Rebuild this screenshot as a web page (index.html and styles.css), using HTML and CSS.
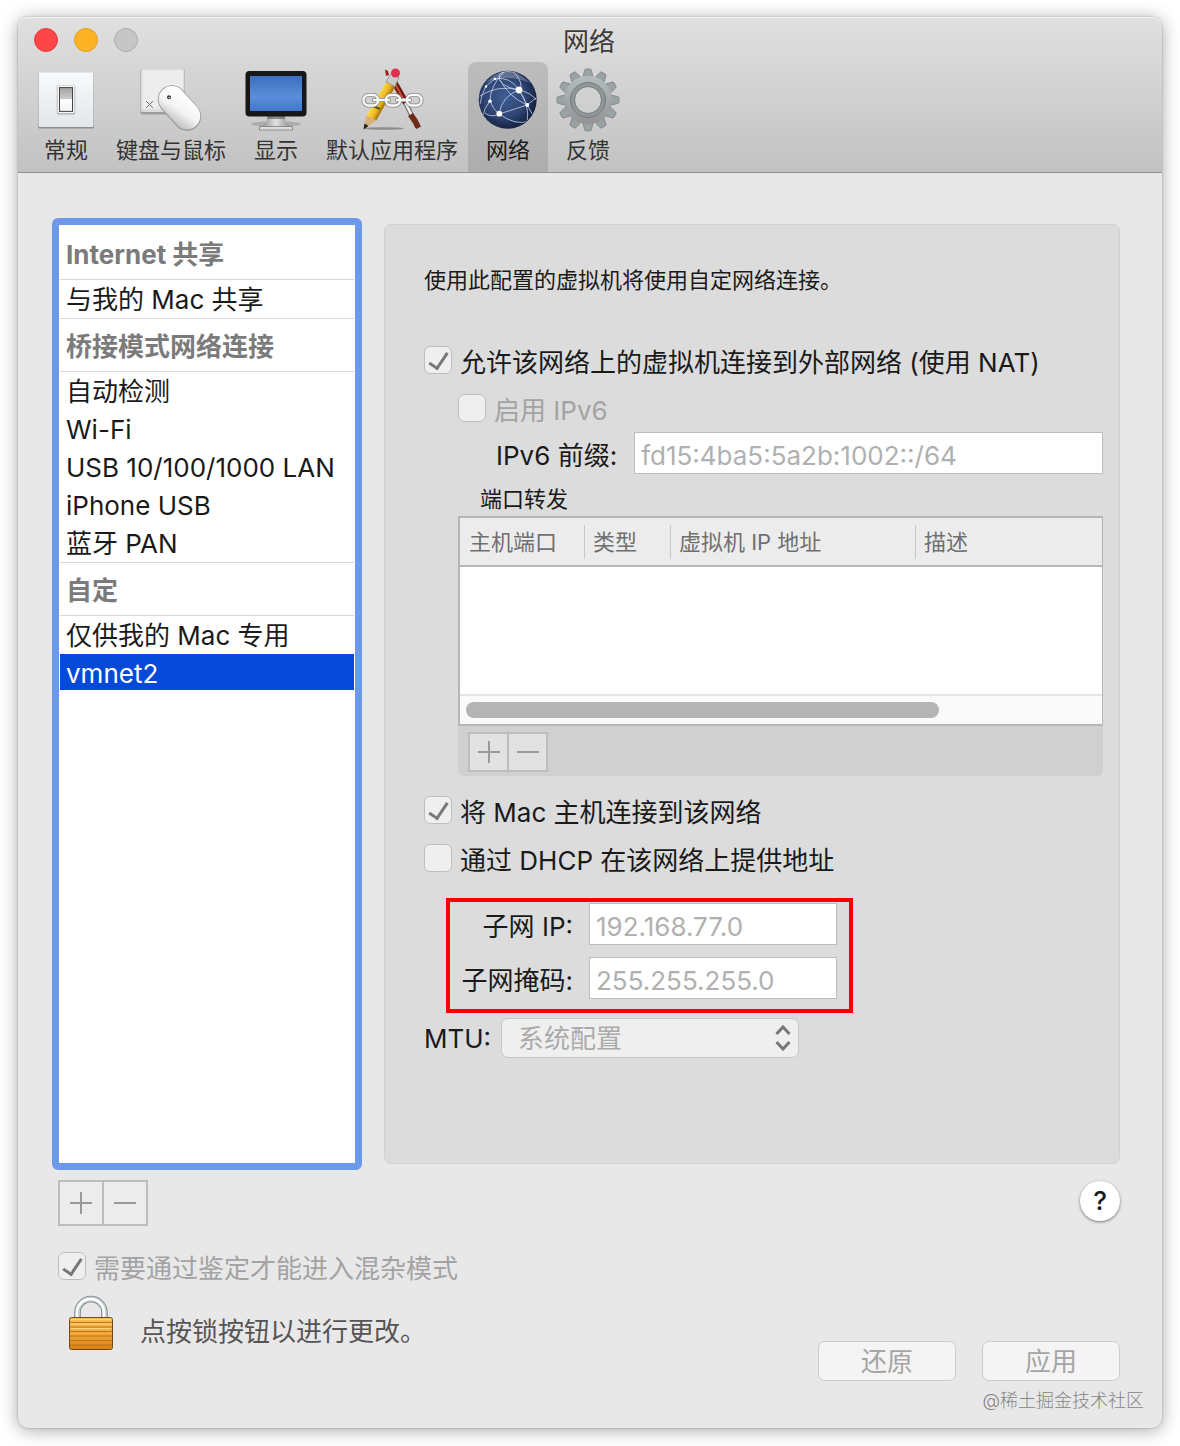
FILE: index.html
```html
<!doctype html>
<html lang="zh-CN">
  <head>
    <meta charset="utf-8" />
    <title>网络</title>
    <link rel="stylesheet" href="styles.css">
  </head>
  <body>
    <div class="window">
      <header class="top">
        <div class="titlebar">
          <div class="lights">
            <button class="light red" aria-label="关闭"></button>
            <button class="light yellow" aria-label="最小化"></button>
            <button class="light" aria-label="缩放" disabled></button>
          </div>
          <h1>网络</h1>
        </div>
        <nav class="toolbar">
          <button class="tool">
            <svg width="64" height="64" viewBox="0 0 64 64">
              <defs>
                <linearGradient id="plate" x1="0" y1="0" x2="0" y2="1"><stop offset="0" stop-color="#f8fafb" /><stop offset="1" stop-color="#e3e7e9" /></linearGradient>
                <linearGradient id="switch" x1="0" y1="0" x2="0" y2="1"><stop offset="0" stop-color="#a2a2a2" /><stop offset=".48" stop-color="#ccc" /><stop offset=".5" stop-color="#fff" /><stop offset="1" stop-color="#f2f2f2" /></linearGradient>
              </defs>
              <rect x="4" y="5" width="56" height="55.5" rx="1.5" fill="#8c8f91" />
              <rect x="4.5" y="4.5" width="55" height="54.5" rx="1.5" fill="url(#plate)" />
              <rect x="22.800" y="17.5" width="18.400" height="29" rx="1.5" fill="#a4a8aa" />
              <rect x="23.5" y="17.8" width="17" height="27.5" rx="1" fill="#f4f6f7" />
              <rect x="25.5" y="19.6" width="13" height="23.8" fill="url(#switch)" stroke="#444" stroke-width="1" />
            </svg>
            <span>常规</span>
          </button>
          <button class="tool">
            <svg width="64" height="64" viewBox="0 0 64 64">
              <defs>
                <linearGradient id="mouse" gradientUnits="userSpaceOnUse" x1="48" y1="28" x2="32" y2="52"><stop offset="0" stop-color="#fff" /><stop offset=".55" stop-color="#f4f4f4" /><stop offset="1" stop-color="#c6c6c6" /></linearGradient>
              </defs>
              <rect x="1.5" y="1" width="44.5" height="45.5" rx="2" fill="#9d9d9d" />
              <rect x="2" y="1" width="43.5" height="43" rx="2" fill="#dcdcdc" />
              <rect x="3.5" y="2" width="40.5" height="39" rx="2" fill="#ececec" />
              <path d="M7 33l7 7M14 33l-7 7" stroke="#777" stroke-width="1" />
              <path d="M33 31.5L48 48.5" stroke="#9b9b9b" stroke-width="28.4" stroke-linecap="round" />
              <path d="M33 31.3L48 48" stroke="url(#mouse)" stroke-width="26.6" stroke-linecap="round" />
              <circle cx="30" cy="29.3" r="2" fill="#333" />
              <circle cx="30.2" cy="29.6" r=".8" fill="#ddd" />
            </svg>
            <span>键盘与鼠标</span>
          </button>
          <button class="tool">
            <svg width="64" height="64" viewBox="0 0 64 64">
              <defs>
                <linearGradient id="screen" x1="0" y1="0" x2="0" y2="1"><stop offset="0" stop-color="#3c6fc2" /><stop offset=".6" stop-color="#5b8ed8" /><stop offset="1" stop-color="#4078cd" /></linearGradient>
                <linearGradient id="stand" x1="0" y1="0" x2="1" y2="0"><stop offset="0" stop-color="#858585" /><stop offset=".5" stop-color="#e2e2e2" /><stop offset="1" stop-color="#858585" /></linearGradient>
              </defs>
              <ellipse cx="32" cy="56" rx="25" ry="3" fill="#000" opacity=".15" />
              <path d="M23.500 48h17.500l1 7 6 4H16l6-4z" fill="url(#stand)" />
              <path d="M23.500 48h17.500v3H23.500z" fill="#555" opacity=".6" />
              <path d="M15.500 58.500h33V62h-33z" fill="#dcdcdc" stroke="#7c7c7c" stroke-width=".8" />
              <rect x="1.5" y="3" width="61" height="45.5" rx="4" fill="#171717" />
              <rect x="6" y="8" width="52" height="35" fill="url(#screen)" />
            </svg>
            <span>显示</span>
          </button>
          <button class="tool">
            <svg width="64" height="64" viewBox="0 0 64 64" fill="none">
              <defs>
                <linearGradient id="wood" gradientUnits="userSpaceOnUse" x1="16" y1="30" x2="27" y2="36"><stop offset="0" stop-color="#f7df4e" /><stop offset=".5" stop-color="#f0b81c" /><stop offset="1" stop-color="#8f5c08" /></linearGradient>
              </defs>
              <ellipse cx="24" cy="60.5" rx="20" ry="1.3" fill="#000" opacity=".3" />
              <path d="M25 1.500l3 1.500 1 4-3 1z" fill="#a61d16" />
              <path d="M33 12L46 35" stroke="#6b150d" stroke-width="6" />
              <path d="M33 12L45 34" stroke="#c4523a" stroke-width="2" />
              <path d="M45.500 35l6 12" stroke="#777" stroke-width="5" />
              <path d="M45.500 35l6 12" stroke="#eee" stroke-width="2.500" />
              <path d="M48 48l5-3q5 6 8 13.500l-4.500 2.500q-2-1-3-5z" fill="#6d2b18" />
              <path d="M27.500 12l9 4.500L16 53 6 48z" fill="url(#wood)" />
              <path d="M6.500 47.500l10 5L3.500 61z" fill="#d9b07a" />
              <path d="M4.500 55.500l4 2.500-5 3.500z" fill="#1d1d1d" />
              <path d="M31 5.500l8 4-4 9-9-4.500z" fill="#c8ccce" stroke="#777" stroke-width=".6" />
              <circle cx="35.500" cy="5" r="4.500" fill="#e22d4d" />
              <path d="M13 38l7 3" stroke="#4b5a16" stroke-width="2.400" />
              <g stroke="#858585" stroke-width="4">
                <rect x="3.500" y="27" width="14.500" height="10.500" rx="5" /><rect x="26" y="27" width="14" height="10.500" rx="5" /><rect x="47" y="27" width="14.500" height="10.500" rx="5" /><path d="M14 32h15M37 32h13" stroke-linecap="round" />
              </g>
              <g stroke="#f8f8f8" stroke-width="2.400">
                <rect x="3.500" y="27" width="14.500" height="10.500" rx="5" /><rect x="26" y="27" width="14" height="10.500" rx="5" /><rect x="47" y="27" width="14.500" height="10.500" rx="5" /><path d="M14 32h15M37 32h13" stroke-linecap="round" />
              </g>
            </svg>
            <span>默认应用程序</span>
          </button>
          <button class="tool selected">
            <svg width="64" height="64" viewBox="0 0 64 64" fill="none">
              <defs>
                <radialGradient id="globe" cx=".45" cy=".45" r=".56"><stop offset="0" stop-color="#3f5c92" /><stop offset=".65" stop-color="#2e4473" /><stop offset="1" stop-color="#14203f" /></radialGradient>
                <clipPath id="globe-edge"><circle cx="31.700" cy="31.700" r="28.500" /></clipPath>
              </defs>
              <circle cx="31.700" cy="31.700" r="29" fill="url(#globe)" />
              <g clip-path="url(#globe-edge)" stroke="#c5d2e8" stroke-width=".8">
                <path d="M19 11Q34 8 43 22Q54 36 51 55" />
                <path d="M43 22Q49 17 38 4Q24 2 23 8Q22 18 43 22" />
                <path d="M2 29Q22 16 43 22Q56 25 61 33" />
                <path d="M43 22Q26 28 23 46" />
                <path d="M14 33Q14 18 28 4" />
                <path d="M14 33Q8 40 7 48" />
                <path d="M14 33Q17 41 23 46Q40 58 53 53" />
                <path d="M23 46Q15 50 9 45" />
                <path d="M51 37Q33 29 24 12" />
                <path d="M43 22L51 37L57 47" />
                <path d="M10 18Q5 28 4 36M10 18L19 11" />
                <path d="M23 46Q39 41 51 37L60 30" />
              </g>
              <g fill="#fff">
                <circle cx="43" cy="22" r="3.400" /><circle cx="23.300" cy="45.700" r="2.900" /><circle cx="14" cy="33.300" r="1.800" /><circle cx="51.300" cy="37" r="1.900" /><circle cx="10" cy="18.500" r="1.200" /><circle cx="19" cy="11" r="1.300" />
              </g>
              <path d="M10 15Q31-9 54 15Q31 5 10 15z" fill="#fff" opacity=".25" />
            </svg>
            <span>网络</span>
          </button>
          <button class="tool">
            <svg width="64" height="64" viewBox="0 0 64 64">
              <defs>
                <linearGradient id="metal" gradientUnits="userSpaceOnUse" x1="0" y1="0" x2="0" y2="64"><stop offset="0" stop-color="#b9c3c6" /><stop offset="1" stop-color="#8c8c8c" /></linearGradient>
                <path id="tooth" d="M26.500 11l2-8.500q.3-1.500 1.500-1.500h4q1.200 0 1.500 1.500l2 8.500z" />
              </defs>
              <g fill="#9aa2a4" stroke="#7c8386" stroke-width=".8">
                <use href="#tooth" /><use href="#tooth" transform="rotate(30 32 32)" /><use href="#tooth" transform="rotate(60 32 32)" /><use href="#tooth" transform="rotate(90 32 32)" /><use href="#tooth" transform="rotate(120 32 32)" /><use href="#tooth" transform="rotate(150 32 32)" /><use href="#tooth" transform="rotate(180 32 32)" /><use href="#tooth" transform="rotate(210 32 32)" /><use href="#tooth" transform="rotate(240 32 32)" /><use href="#tooth" transform="rotate(270 32 32)" /><use href="#tooth" transform="rotate(300 32 32)" /><use href="#tooth" transform="rotate(330 32 32)" />
              </g>
              <circle cx="32" cy="32" r="19" fill="none" stroke="url(#metal)" stroke-width="10" />
              <circle cx="32" cy="32" r="15.500" fill="none" stroke="#8f9698" stroke-width="4" />
              <circle cx="32" cy="32" r="17.500" fill="none" stroke="#737a7d" stroke-width="1" />
              <circle cx="32" cy="32" r="13.500" fill="none" stroke="#757b7d" stroke-width="1" />
            </svg>
            <span>反馈</span>
          </button>
        </nav>
      </header>

      <main class="content">
        <div class="columns">
          <div class="sidebar">
            <h2>Internet 共享</h2>
            <ul>
              <li><button>与我的 Mac 共享</button></li>
            </ul>
            <h2>桥接模式网络连接</h2>
            <ul>
              <li><button>自动检测</button></li>
              <li><button>Wi-Fi</button></li>
              <li><button>USB 10/100/1000 LAN</button></li>
              <li><button>iPhone USB</button></li>
              <li><button>蓝牙 PAN</button></li>
            </ul>
            <h2>自定</h2>
            <ul>
              <li><button>仅供我的 Mac 专用</button></li>
              <li><button class="active">vmnet2</button></li>
            </ul>
          </div>

          <section class="panel">
            <p class="intro">使用此配置的虚拟机将使用自定网络连接。</p>
            <label class="check"><input type="checkbox" checked />允许该网络上的虚拟机连接到外部网络 (使用 NAT)</label>
            <div class="indent">
              <label class="check muted"><input type="checkbox" disabled />启用 IPv6</label>
              <div class="prefix">
                <label for="prefix">IPv6 前缀:</label>
                <input type="text" id="prefix" value="fd15:4ba5:5a2b:1002::/64" disabled />
              </div>
              <h3>端口转发</h3>
              <div class="ports">
                <div class="grid">
                  <table>
                    <thead>
                      <tr>
                        <th class="port"><span>主机端口</span></th>
                        <th class="type"><span>类型</span></th>
                        <th class="address"><span>虚拟机 IP 地址</span></th>
                        <th><span>描述</span></th>
                      </tr>
                    </thead>
                  </table>
                  <div class="track"><div class="thumb"></div></div>
                </div>
                <div class="pair small">
                  <button aria-label="添加端口" disabled><svg width="22" height="22"><path d="M0 11h22M11 0v22" /></svg></button>
                  <button aria-label="移除端口" disabled><svg width="22" height="22"><path d="M0 11h22" /></svg></button>
                </div>
              </div>
            </div>
            <label class="check"><input type="checkbox" checked />将 Mac 主机连接到该网络</label>
            <label class="check"><input type="checkbox" />通过 DHCP 在该网络上提供地址</label>
            <div class="subnet">
              <label for="ip">子网 IP:</label>
              <input type="text" id="ip" value="192.168.77.0" disabled />
              <label for="mask">子网掩码:</label>
              <input type="text" id="mask" value="255.255.255.0" disabled />
            </div>
            <div class="mtu">
              <label for="mtu">MTU:</label>
              <div class="select">
                <select id="mtu" disabled>
                  <option>系统配置</option>
                </select>
                <svg width="16" height="26" viewBox="0 0 16 26"><path d="M1.500 9L8 2l6.500 7M1.500 17L8 24l6.500-7" /></svg>
              </div>
            </div>
          </section>
        </div>

        <div class="under">
          <div class="pair">
            <button aria-label="添加网络" disabled><svg width="22" height="22"><path d="M0 11h22M11 0v22" /></svg></button>
            <button aria-label="移除网络" disabled><svg width="22" height="22"><path d="M0 11h22" /></svg></button>
          </div>
          <button class="help">?</button>
        </div>
        <label class="check muted promisc"><input type="checkbox" checked disabled />需要通过鉴定才能进入混杂模式</label>
        <div class="bottom">
          <button class="lock" aria-label="锁">
            <svg width="46" height="56" viewBox="0 0 46 56">
              <defs>
                <linearGradient id="brass" x1="0" y1="0" x2="0" y2="1"><stop offset="0" stop-color="#f6bd55" /><stop offset=".5" stop-color="#f5a93a" /><stop offset="1" stop-color="#d87d14" /></linearGradient>
              </defs>
              <path d="M9.500 24V17.500a13.500 13.500 0 0 1 27 0V24" fill="none" stroke="#7d868a" stroke-width="6.500" />
              <path d="M9.500 24V17.500a13.500 13.500 0 0 1 27 0V24" fill="none" stroke="#c3cccf" stroke-width="4.800" />
              <path d="M9 24V17.500a13.500 13.500 0 0 1 27 0V24" fill="none" stroke="#fff" stroke-width="2.400" />
              <rect x="1.500" y="22.500" width="43" height="32" rx="2" fill="url(#brass)" stroke="#7b4a12" />
              <path d="M2 27.500h42M2 32h42M2 36.500h42M2 41h42M2 45.500h42M2 50h42" stroke="#b5700f" stroke-width=".9" />
              <path d="M3 24.500h40M3 29h40M3 33.500h40" stroke="#ffdb90" stroke-width=".8" />
            </svg>
          </button>
          <p>点按锁按钮以进行更改。</p>
          <div class="actions">
            <button disabled>还原</button>
            <button disabled>应用</button>
          </div>
        </div>
      </main>
      <div class="credit">@稀土掘金技术社区</div>
    </div>
  </body>
</html>
```
FILE: styles.css
```css
* {
  box-sizing: border-box;
}
body {
  margin: 0;
  padding: 17px 18px 18px;
  background: #fff;
  color: #1a1a1a;
  font-family: Inter, "Noto Sans CJK SC", sans-serif;
  font-size: 26px;
  line-height: 36px;
}
button,
input,
select {
  font: inherit;
  color: inherit;
}
button {
  margin: 0;
  padding: 0;
  border: none;
  background: none;
}
h1,
h2,
h3,
p,
ul {
  margin: 0;
  padding: 0;
}
.window {
  position: relative;
  background: #e8e8e8;
  border-radius: 10px;
  box-shadow: 0 0 2px rgba(0, 0, 0, 0.3), 0 2px 18px rgba(0, 0, 0, 0.35);
}

/* Title bar and toolbar */
.top {
  background: linear-gradient(#e0e0e0, #c2c2c2);
  border-bottom: 1px solid #8f8f8f;
  border-radius: 10px 10px 0 0;
  box-shadow: inset 0 1px #f4f4f4;
}
.titlebar {
  display: grid;
  grid-template-columns: 1fr auto 1fr;
  align-items: center;
  height: 45px;
  padding: 0 18px 0 16px;
}
.lights {
  display: flex;
  gap: 16px;
}
.light {
  width: 24px;
  height: 24px;
  border: 1px solid #adadad;
  border-radius: 50%;
  background: #c6c6c6;
}
.light.red {
  background: #fc4648;
  border-color: #e8393c;
}
.light.yellow {
  background: #fdb424;
  border-color: #e5a01c;
}
h1 {
  padding-top: 4px;
  color: #3c3c3c;
  font-size: 26px;
  font-weight: 400;
}
.toolbar {
  display: flex;
  padding-left: 8px;
}
.tool {
  display: flex;
  flex-direction: column;
  align-items: center;
  gap: 4px;
  min-width: 80px;
  height: 110px;
  padding: 6px 8px;
  color: #333;
  font-size: 22px;
  line-height: 28px;
}
.tool span {
  padding: 0 2px;
}
.tool.selected {
  background: linear-gradient(#bdbdbd, #adadad);
  border-radius: 8px 8px 0 0;
  color: #1a1a1a;
}

.content {
  padding: 45px 42px 47px 34px;
}
.columns {
  display: flex;
  gap: 22px;
}

/* Network list */
.sidebar {
  width: 310px;
  min-height: 952px;
  padding: 1px;
  background: #fff;
  border: 7px solid #6e98eb;
  border-radius: 6px;
}
h2 {
  height: 54px;
  padding: 1px 6px 0;
  border: solid #d8d8d8;
  border-width: 1px 0;
  color: #7b7b7b;
  font-size: 26px;
  font-weight: 700;
  line-height: 54px;
}
h2:first-child {
  border-top-color: transparent;
}
.sidebar ul {
  list-style: none;
}
.sidebar li {
  padding-bottom: 2px;
}
.sidebar button {
  display: block;
  width: 100%;
  height: 36px;
  padding: 2px 6px 0;
  text-align: left;
  white-space: nowrap;
}
.sidebar .active {
  background: #0549d9;
  color: #fff;
}

/* Settings panel */
.panel {
  flex: 1;
  margin: 6px 0;
  padding: 37px 16px 0 39px;
  background: #dcdcdc;
  border: 1px solid #d1d1d1;
  border-radius: 7px;
}
.intro {
  margin-bottom: 47px;
  font-size: 22px;
}
.check {
  display: flex;
  align-items: center;
  gap: 8px;
  height: 36px;
  margin-bottom: 12px;
  white-space: nowrap;
}
.muted {
  color: #a3a3a3;
}
input[type="checkbox"] {
  appearance: none;
  flex: none;
  width: 28px;
  height: 28px;
  margin: 0 0 6px;
  background: #efefef;
  border: 1px solid #bebebe;
  border-radius: 6px;
}
input[type="checkbox"]:checked::before {
  content: "";
  display: block;
  width: 8px;
  height: 17px;
  margin: 2px 0 0 8px;
  border: solid #777;
  border-width: 0 3px 3px 0;
  transform: rotate(34deg);
}
input[type="text"] {
  width: 100%;
  min-width: 0;
  height: 42px;
  padding: 4px 6px 0;
  background: #fff;
  border: 1px solid #bcbcbc;
  border-radius: 0;
  color: #b0b0b0;
}
.indent {
  padding-left: 34px;
}
.indent .check {
  margin-bottom: 3px;
}
.prefix {
  display: flex;
  align-items: center;
  gap: 17px;
  padding-left: 38px;
}
.prefix label {
  flex: none;
}
.prefix label,
.subnet label {
  padding-top: 5px;
}
h3 {
  margin-top: 8px;
  padding: 1px 0 0 22px;
  font-size: 22px;
  font-weight: 400;
  line-height: 33px;
}
.ports {
  margin-bottom: 19px;
  background: #d0d0d0;
  border-radius: 6px;
}
.grid {
  display: flex;
  flex-direction: column;
  height: 210px;
  background: #fff;
  border: solid #b6b6b6;
  border-width: 2px 1px 2px 2px;
}
table {
  width: 100%;
  table-layout: fixed;
  border-collapse: collapse;
  background: #ececec;
  color: #707070;
  font-size: 22px;
}
th {
  height: 48px;
  padding: 0;
  border-bottom: 2px solid #b6b6b6;
  font-weight: 400;
  text-align: left;
}
th span {
  display: block;
  padding-left: 8px;
  border-left: 1px solid #c8c8c8;
  line-height: 34px;
  white-space: nowrap;
}
th:first-child span {
  border-left-color: transparent;
}
.port {
  width: 124px;
}
.type {
  width: 86px;
}
.address {
  width: 245px;
}
.track {
  height: 30px;
  margin-top: auto;
  padding: 6px;
  background: #fafafa;
  border-top: 2px solid #e4e4e4;
}
.thumb {
  width: 75%;
  height: 16px;
  border-radius: 8px;
  background: #b4b4b4;
}
.pair {
  display: flex;
}
.pair button {
  display: flex;
  align-items: center;
  justify-content: center;
  width: 46px;
  height: 46px;
  background: #ececec;
  border: 2px solid #bdbdbd;
}
.pair button + button {
  margin-left: -2px;
}
.pair svg {
  stroke: #9a9a9a;
  stroke-width: 2;
}
.pair.small {
  padding: 6px 10px 4px;
}
.pair.small button {
  width: 41px;
  height: 40px;
  background: #e2e2e2;
}
.subnet {
  display: grid;
  grid-template-columns: 119px 248px;
  gap: 12px 16px;
  align-items: center;
  width: 407px;
  margin: 19px 0 5px 22px;
  padding: 1px 0 10px 4px;
  border: 4px solid #f80000;
  text-align: right;
}
.mtu {
  display: flex;
  align-items: center;
  gap: 10px;
}
.mtu label {
  padding-top: 2px;
}
.select {
  position: relative;
  width: 298px;
}
select {
  display: block;
  appearance: none;
  width: 100%;
  height: 40px;
  padding: 2px 16px 0;
  background: #efefef;
  border: 1px solid #c6c6c6;
  border-radius: 7px;
}
select:disabled {
  color: #ababab;
  opacity: 1;
}
.select svg {
  position: absolute;
  right: 8px;
  top: 7px;
  fill: none;
  stroke: #777;
  stroke-width: 3;
}

/* Area below the two columns */
.under {
  display: flex;
  justify-content: space-between;
  padding: 10px 0 0 6px;
}
.help {
  width: 40px;
  height: 40px;
  margin-top: 1px;
  background: #fff;
  border-radius: 50%;
  box-shadow: 0 1px 3px rgba(0, 0, 0, 0.5);
  font-weight: 500;
}
.promisc {
  margin: 25px 0 8px 6px;
}
.bottom {
  display: flex;
  align-items: flex-start;
}
.lock {
  height: 56px;
  margin-left: 16px;
}
.bottom p {
  margin: 19px 0 0 26px;
  color: #555;
}
.actions {
  display: flex;
  gap: 26px;
  margin: 46px 0 0 auto;
}
.actions button {
  width: 138px;
  height: 40px;
  padding-top: 2px;
  background: #f4f4f4;
  border: 1px solid #cdcdcd;
  border-radius: 7px;
  color: #a5a5a5;
}
.credit {
  position: absolute;
  right: 18px;
  bottom: 14px;
  color: #858585;
  font-size: 18px;
  font-weight: 300;
  line-height: 26px;
}
```
